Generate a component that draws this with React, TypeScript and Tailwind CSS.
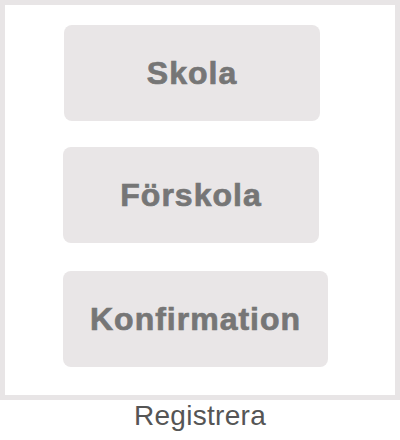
export default function App() {
  const items = [
    { label: "Skola", cls: "mt-[20px] ml-[59px]" },
    { label: "Förskola", cls: "mt-[26px] ml-[58px]" },
    { label: "Konfirmation", cls: "mt-[28px] ml-[58px]" },
  ];

  return (
    <div className="w-[400px] bg-white font-['Liberation_Sans',Arial,sans-serif]">
      <div className="flex h-[400px] w-[400px] flex-col items-start border-[5px] border-[#e8e5e6]">
        {items.map((it) => (
          <button
            key={it.label}
            className={`${it.cls} flex h-[96px] min-w-[256px] items-center justify-center rounded-[8px] bg-[#e9e6e7] px-[27px] text-[32px] font-bold tracking-[1px] text-[#767676] [-webkit-text-stroke:0.7px_#767676]`}
          >
            {it.label}
          </button>
        ))}
      </div>
      <p className="text-center text-[28px] leading-[32px] tracking-[0.3px] text-[#555555]">Registrera</p>
    </div>
  );
}
